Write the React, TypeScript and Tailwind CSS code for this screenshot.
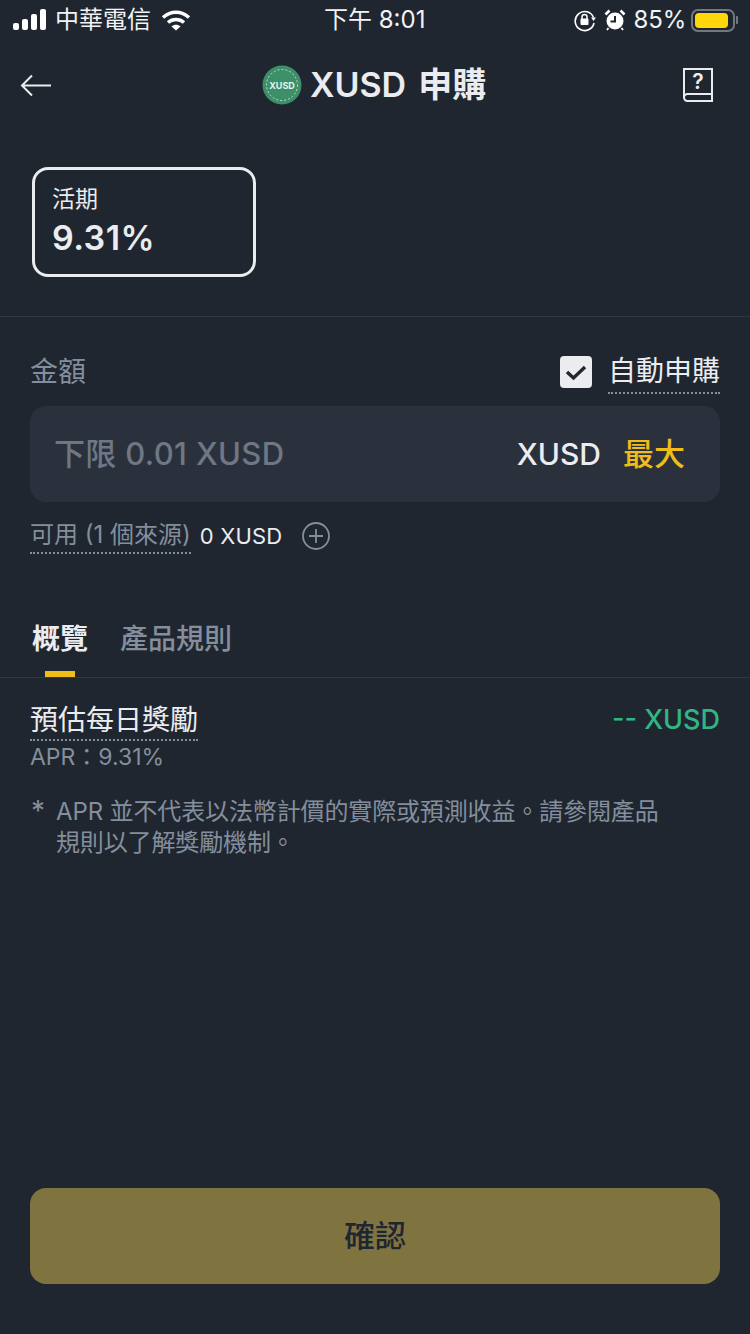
export default function App() {
  return (
    <div className="w-[750px] h-[1334px] bg-[#1f2630] flex flex-col font-['Inter','Noto_Sans_CJK_TC',sans-serif] text-[#eaecef] overflow-hidden">
      {/* status bar */}
      <div className="h-[40px] flex items-center justify-between pl-[13px] pr-[12px] relative">
        <div className="flex items-center">
          <div className="flex items-end gap-[3px] h-[21px] mb-[1px]">
            <span className="w-[6px] h-[7px] bg-white rounded-[2px]" />
            <span className="w-[6px] h-[11px] bg-white rounded-[2px]" />
            <span className="w-[6px] h-[16px] bg-white rounded-[2px]" />
            <span className="w-[6px] h-[21px] bg-white rounded-[2px]" />
          </div>
          <span className="ml-[9px] text-[24px] leading-[30px] text-[#f2f3f5]">中華電信</span>
          <svg className="ml-[10px]" width="30" height="22" viewBox="0 0 30 22" fill="none">
            <path d="M2 8.5C9.5 1.5 20.5 1.5 28 8.5" stroke="#fff" strokeWidth="3.4" />
            <path d="M7 13.5C11.5 9.5 18.5 9.5 23 13.5" stroke="#fff" strokeWidth="3.4" />
            <path d="M10.5 17.5C13 15.2 17 15.2 19.5 17.5L15 21.5Z" fill="#fff" />
          </svg>
        </div>
        <span className="absolute left-[324px] top-[4px] text-[24px] leading-[32px] text-[#f2f3f5]">下午 8:01</span>
        <div className="flex items-center">
          <svg width="24" height="24" viewBox="0 0 24 24" fill="none">
            <path d="M20.5 9.5A9.5 9.5 0 1 0 21 15" stroke="#fff" strokeWidth="1.6" />
            <path d="M18 9.5H23L20.5 13Z" fill="#fff" />
            <rect x="7.5" y="10.5" width="8" height="6.5" rx="1" fill="#fff" />
            <path d="M9 11V9a2.5 2.5 0 0 1 5 0v2" stroke="#fff" strokeWidth="1.5" />
          </svg>
          <svg className="ml-[7px]" width="22" height="24" viewBox="0 0 22 24" fill="none">
            <circle cx="11" cy="13" r="8.5" fill="#fff" />
            <path d="M11 8V13.5H6.5" stroke="#1f2630" strokeWidth="2" />
            <path d="M1.5 6.5L5.5 2.5M20.5 6.5L16.5 2.5" stroke="#fff" strokeWidth="2.6" />
            <path d="M4.5 20L3 22M17.5 20L19 22" stroke="#fff" strokeWidth="1.8" />
          </svg>
          <span className="ml-[8px] text-[24px] leading-[32px] text-[#f2f3f5] tracking-[-0.2px]">85%</span>
          <div className="ml-[5px] w-[44px] h-[23px] rounded-[7px] border-[2px] border-[#73767c] p-[2px] flex">
            <div className="w-[33px] bg-[#ffd60a] rounded-[4px]" />
          </div>
          <div className="ml-[1px] w-[2px] h-[8px] bg-[#73767c] rounded-r-[1px]" />
        </div>
      </div>

      {/* header */}
      <div className="h-[90px] flex items-center justify-between pl-[20px] pr-[37px] relative">
        <svg width="32" height="24" viewBox="0 0 32 24" fill="none">
          <path d="M31 12.5H2M12 2.5L2 12.5L12 22.5" stroke="#eaecef" strokeWidth="2" />
        </svg>
        <div className="absolute left-[262px] top-[24px] flex items-center">
          <svg width="40" height="40" viewBox="0 0 40 40">
            <circle cx="20" cy="20" r="19.5" fill="#3c8f68" />
            <circle cx="20" cy="20" r="15.5" fill="none" stroke="#bfe0cf" strokeWidth="1" strokeDasharray="2 2" />
            <text x="20" y="23.5" textAnchor="middle" fontSize="9" fontWeight="700" fill="#e4f3ea" fontFamily="Inter">XUSD</text>
          </svg>
          <span className="ml-[8px] text-[34px] leading-[42px] font-semibold text-[#eaecef]">XUSD</span>
          <span className="ml-[12px] text-[34px] leading-[42px] font-semibold text-[#eaecef]">申購</span>
        </div>
        <svg width="30" height="34" viewBox="0 0 30 34" fill="none">
          <path d="M29 1H1V29.5a3.5 3.5 0 0 0 3.5 3.5H29V1ZM1 29.5a3.5 3.5 0 0 1 3.5-3.5H29" stroke="#eaecef" strokeWidth="2" />
          <text x="15" y="21" textAnchor="middle" fontSize="21" fontWeight="600" fill="#eaecef" fontFamily="Inter">?</text>
        </svg>
      </div>

      {/* plan card */}
      <div className="px-[32px] pt-[37px] pb-[39px] border-b border-[#32383f]">
        <div className="w-[224px] h-[110px] rounded-[16px] border-[3px] border-[#eaecef] pl-[17px] pt-[13px]">
          <div className="text-[23px] leading-[32px] text-[#eaecef]">活期</div>
          <div className="mt-[2px] text-[34px] leading-[42px] font-semibold text-[#eaecef] tracking-[0.4px]">9.31%</div>
        </div>
      </div>

      {/* amount */}
      <div className="px-[30px]">
        <div className="flex items-center justify-between mt-[35px] h-[40px]">
          <span className="text-[28px] leading-[36px] text-[#848e9c]">金額</span>
          <div className="flex items-center">
            <span className="w-[32px] h-[32px] bg-[#eaecef] rounded-[4px] flex items-center justify-center">
              <svg width="24" height="20" viewBox="0 0 24 20" fill="none">
                <path d="M3 10L9.5 16L21 5" stroke="#1f2630" strokeWidth="3.4" />
              </svg>
            </span>
            <span className="ml-[16px] text-[28px] leading-[36px] text-[#eaecef] border-b-[2px] border-dotted border-[#848e9c] pb-[3px] mt-[2px]">自動申購</span>
          </div>
        </div>
        <div className="mt-[14px] h-[96px] rounded-[16px] bg-[#2b313c] flex items-center pl-[24px] pr-[35px]">
          <span className="text-[31px] text-[#6f7785] font-medium tracking-[0.35px]">下限 0.01 XUSD</span>
          <span className="ml-auto text-[30px] text-[#eaecef] font-medium">XUSD</span>
          <span className="ml-[22px] text-[31px] text-[#efbc1a] font-medium">最大</span>
        </div>
        <div className="flex items-center mt-[16px] h-[36px]">
          <span className="text-[24px] leading-[32px] text-[#848e9c] border-b-[2px] border-dotted border-[#848e9c] pb-[1px]">可用 (1 個來源)</span>
          <span className="ml-[9px] text-[22px] text-[#eaecef] tracking-[0.2px]">0 XUSD</span>
          <svg className="ml-[20px]" width="28" height="28" viewBox="0 0 28 28" fill="none">
            <circle cx="14" cy="14" r="13" stroke="#848e9c" strokeWidth="1.8" />
            <path d="M14 7V21M7 14H21" stroke="#848e9c" strokeWidth="1.8" />
          </svg>
        </div>
      </div>

      {/* tabs */}
      <div className="mt-[66px] h-[58px] border-b border-[#32383f] flex pl-[32px] gap-[32px]">
        <div className="relative flex flex-col items-center">
          <span className="text-[28px] leading-[38px] font-semibold text-[#eaecef]">概覽</span>
          <span className="absolute bottom-0 w-[30px] h-[6px] bg-[#efbc1a]" />
        </div>
        <span className="text-[28px] leading-[38px] font-medium text-[#848e9c]">產品規則</span>
      </div>

      {/* overview */}
      <div className="px-[30px] flex-1 flex flex-col">
        <div className="flex justify-between items-start mt-[24px]">
          <span className="text-[28px] leading-[36px] text-[#eaecef] border-b-[2px] border-dotted border-[#848e9c] pb-[1px]">預估每日獎勵</span>
          <span className="text-[27px] leading-[36px] text-[#32b584] font-medium">-- XUSD</span>
        </div>
        <div className="text-[23px] leading-[32px] text-[#848e9c]">APR：9.31%</div>
        <div className="flex mt-[23px] text-[24px] leading-[31px] text-[#848e9c] tracking-[-0.13px]">
          <span className="w-[26px] shrink-0 pl-[1px] text-[28px]">*</span>
          <span className="w-[620px]">APR 並不代表以法幣計價的實際或預測收益。請參閱產品規則以了解獎勵機制。</span>
        </div>
        <div className="mt-auto mb-[50px] h-[96px] rounded-[16px] bg-[#7f7440] flex items-center justify-center text-[31px] font-medium text-[#1f2630]">確認</div>
      </div>
    </div>
  );
}
